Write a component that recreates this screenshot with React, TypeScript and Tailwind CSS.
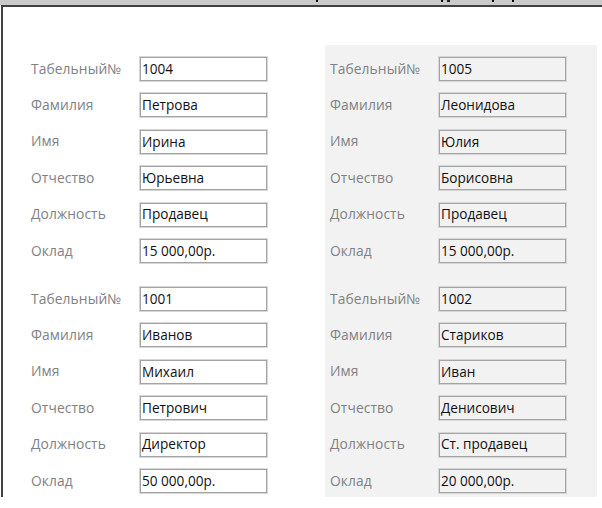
import React from 'react';

type Employee = {
  id: string;
  last: string;
  first: string;
  middle: string;
  position: string;
  salary: string;
};

const leftRecords: Employee[] = [
  { id: '1004', last: 'Петрова', first: 'Ирина', middle: 'Юрьевна', position: 'Продавец', salary: '15 000,00р.' },
  { id: '1001', last: 'Иванов', first: 'Михаил', middle: 'Петрович', position: 'Директор', salary: '50 000,00р.' },
];

const rightRecords: Employee[] = [
  { id: '1005', last: 'Леонидова', first: 'Юлия', middle: 'Борисовна', position: 'Продавец', salary: '15 000,00р.' },
  { id: '1002', last: 'Стариков', first: 'Иван', middle: 'Денисович', position: 'Ст. продавец', salary: '20 000,00р.' },
];

const FONT = "font-['Open_Sans','Noto_Sans',sans-serif]";

function Field({ label, value, shaded }: { label: string; value: string; shaded: boolean }) {
  return (
    <div className="flex items-center h-[24px]">
      <span className={`w-[109px] shrink-0 text-[13.8px] tracking-[0.1px] text-[#808184] ${FONT}`}>{label}</span>
      <div
        className={`w-[127px] h-[24px] flex items-center pl-[1px] border border-[#a4a4a4] shadow-[0_0_0_1px_#d6d6d6] text-[13.6px] text-[#111] ${FONT} ${
          shaded ? 'bg-[#f2f2f2]' : 'bg-white'
        }`}
      >
        {value}
      </div>
    </div>
  );
}

function Record({ emp, shaded }: { emp: Employee; shaded: boolean }) {
  return (
    <div className="flex flex-col gap-[12.4px]">
      <Field label="Табельный№" value={emp.id} shaded={shaded} />
      <Field label="Фамилия" value={emp.last} shaded={shaded} />
      <Field label="Имя" value={emp.first} shaded={shaded} />
      <Field label="Отчество" value={emp.middle} shaded={shaded} />
      <Field label="Должность" value={emp.position} shaded={shaded} />
      <Field label="Оклад" value={emp.salary} shaded={shaded} />
    </div>
  );
}

export default function App() {
  return (
    <div className="w-[602px] h-[508px] bg-white overflow-hidden">
      {/* top strip with clipped text descenders from the row above */}
      <div className="relative h-[5px] bg-[#cacaca]">
        <span className="absolute left-[316px] top-0 w-[2px] h-[2px] bg-black" />
        <span className="absolute left-[441px] top-0 w-[2px] h-[2px] bg-black" />
        <span className="absolute left-[447px] top-0 w-[3px] h-[2px] bg-[#222]" />
        <span className="absolute left-[492px] top-0 w-[2px] h-[2px] bg-black" />
        <span className="absolute left-[512px] top-0 w-[2px] h-[2px] bg-black" />
      </div>

      <div className="ml-[1px] h-[492px] border-t-2 border-l-2 border-[#404040] flex">
        <div className="w-[322px] pt-[50px] pl-[28px] flex flex-col gap-[24px]">
          {leftRecords.map((e) => (
            <Record key={e.id} emp={e} shaded={false} />
          ))}
        </div>
        <div className="w-[272px] mt-[38px] bg-[#f2f2f2] pt-[12px] pl-[5px] flex flex-col gap-[24px]">
          {rightRecords.map((e) => (
            <Record key={e.id} emp={e} shaded={true} />
          ))}
        </div>
      </div>
    </div>
  );
}
